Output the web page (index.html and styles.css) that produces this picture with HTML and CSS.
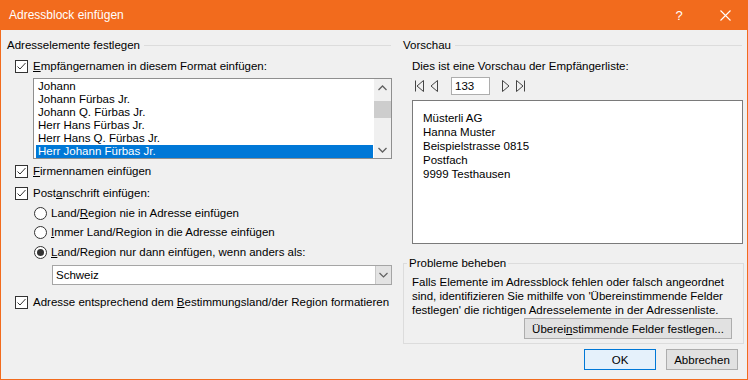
FILE: index.html
```html
<!DOCTYPE html>
<html lang="de">

<head>
    <meta charset="UTF-8">
    <meta name="viewport" content="width=device-width, initial-scale=1.0">
    <title>Adressblock einfügen</title>
    <link rel="stylesheet" href="styles.css">
</head>

<body>
    <div class="dialog">
        <div class="titlebar">
            <span class="title">Adressblock einfügen</span>
            <span class="tb-btn">?</span>
            <span class="tb-btn">
                <svg width="11" height="11" viewBox="0 0 11 11"><path d="M0.5 0.5L10.5 10.5M10.5 0.5L0.5 10.5" stroke="#fff" stroke-width="1.1" fill="none"/></svg>
            </span>
        </div>

        <div class="content">
            <div class="col col-left">
                <div class="group-head"><span>Adresselemente festlegen</span><span class="rule"></span></div>

                <div class="check mt5">
                    <span class="box"><svg width="11" height="11" viewBox="0 0 11 11"><path d="M1.5 5.5L4 8L9.5 2" stroke="#333" fill="none"/></svg></span>
                    <span><u>E</u>mpfängernamen in diesem Format einfügen:</span>
                </div>

                <div class="listbox">
                    <ul class="items">
                        <li>Johann</li>
                        <li>Johann Fürbas Jr.</li>
                        <li>Johann Q. Fürbas Jr.</li>
                        <li>Herr Hans Fürbas Jr.</li>
                        <li>Herr Hans Q. Fürbas Jr.</li>
                        <li class="sel">Herr Johann Fürbas Jr.</li>
                    </ul>
                    <div class="scrollbar">
                        <span class="sb-arrow"><svg width="9" height="6" viewBox="0 0 9 6"><path d="M0.5 5L4.5 1L8.5 5" stroke="#606060" stroke-width="1.3" fill="none"/></svg></span>
                        <span class="thumb"></span>
                        <span class="sb-space"></span>
                        <span class="sb-arrow"><svg width="9" height="6" viewBox="0 0 9 6"><path d="M0.5 1L4.5 5L8.5 1" stroke="#606060" stroke-width="1.3" fill="none"/></svg></span>
                    </div>
                </div>

                <div class="check mt4">
                    <span class="box"><svg width="11" height="11" viewBox="0 0 11 11"><path d="M1.5 5.5L4 8L9.5 2" stroke="#333" fill="none"/></svg></span>
                    <span><u>F</u>irmennamen einfügen</span>
                </div>
                <div class="check mt6">
                    <span class="box"><svg width="11" height="11" viewBox="0 0 11 11"><path d="M1.5 5.5L4 8L9.5 2" stroke="#333" fill="none"/></svg></span>
                    <span>Post<u>a</u>nschrift einfügen:</span>
                </div>

                <div class="radio mt4">
                    <span class="dot"></span>
                    <span>Land/<u>R</u>egion nie in Adresse einfügen</span>
                </div>
                <div class="radio mt3">
                    <span class="dot"></span>
                    <span><u>I</u>mmer Land/Region in die Adresse einfügen</span>
                </div>
                <div class="radio mt4">
                    <span class="dot on"></span>
                    <span><u>L</u>and/Region nur dann einfügen, wenn anders als:</span>
                </div>

                <div class="combo">
                    <span class="combo-text">Schweiz</span>
                    <span class="combo-btn"><svg width="9" height="6" viewBox="0 0 9 6"><path d="M0.5 1L4.5 5L8.5 1" stroke="#606060" stroke-width="1.2" fill="none"/></svg></span>
                </div>

                <div class="check mt9">
                    <span class="box"><svg width="11" height="11" viewBox="0 0 11 11"><path d="M1.5 5.5L4 8L9.5 2" stroke="#333" fill="none"/></svg></span>
                    <span>Adresse entsprechend dem <u>B</u>estimmungsland/der Region formatieren</span>
                </div>
            </div>

            <div class="col col-right">
                <div class="group-head"><span>Vorschau</span><span class="rule"></span></div>
                <div class="hint">Dies ist eine Vorschau der Empfängerliste:</div>

                <div class="nav">
                    <svg class="nav-ico" width="10" height="12" viewBox="0 0 10 12"><path d="M1.5 0.5V11.5M9.5 0.5L3 6L9.5 11.5Z" stroke="#444" fill="none"/></svg>
                    <svg class="nav-ico" width="10" height="12" viewBox="0 0 10 12"><path d="M8.5 0.5L2 6L8.5 11.5Z" stroke="#444" fill="none"/></svg>
                    <span class="record">133</span>
                    <svg class="nav-ico" width="10" height="12" viewBox="0 0 10 12"><path d="M1.5 0.5L8 6L1.5 11.5Z" stroke="#444" fill="none"/></svg>
                    <svg class="nav-ico" width="10" height="12" viewBox="0 0 10 12"><path d="M0.5 0.5L7 6L0.5 11.5ZM8.5 0.5V11.5" stroke="#444" fill="none"/></svg>
                </div>

                <div class="preview">
                    <div>Müsterli AG</div>
                    <div>Hanna Muster</div>
                    <div>Beispielstrasse 0815</div>
                    <div>Postfach</div>
                    <div>9999 Testhausen</div>
                </div>

                <fieldset class="trouble">
                    <legend>Probleme beheben</legend>
                    <p class="trouble-text">Falls Elemente im Adressblock fehlen oder falsch angeordnet<br>sind, identifizieren Sie mithilfe von 'Übereinstimmende Felder<br>festlegen' die richtigen Adresselemente in der Adressenliste.</p>
                    <div class="trouble-actions">
                        <button class="btn match">Überei<u>n</u>stimmende Felder festlegen...</button>
                    </div>
                </fieldset>
            </div>
        </div>

        <div class="footer">
            <button class="btn default">OK</button>
            <button class="btn">Abbrechen</button>
        </div>
    </div>
</body>

</html>
```

FILE: styles.css
```css
* {
    box-sizing: border-box;
}

body {
    margin: 0;
    font-family: "Liberation Sans", Arial, sans-serif;
    font-size: 11.5px;
    color: #000;
    background-color: #f0f0f0;
}

.dialog {
    width: 748px;
    height: 380px;
    border: 1px solid #f26b1d;
    border-top: 0;
    background-color: #f0f0f0;
    display: flex;
    flex-direction: column;
}

.titlebar {
    height: 30px;
    margin: 0 -1px;
    background-color: #f26b1d;
    color: #fff;
    display: flex;
    align-items: center;
}

.title {
    flex: 1;
    padding-left: 9px;
    font-size: 12px;
}

.tb-btn {
    width: 46px;
    height: 30px;
    display: flex;
    align-items: center;
    justify-content: center;
    font-size: 13px;
}

.content {
    display: grid;
    grid-template-columns: 386px 341px;
    column-gap: 10px;
    padding: 7px 3px 0 6px;
}

.col {
    display: flex;
    flex-direction: column;
}

.group-head {
    display: flex;
    align-items: center;
    height: 16px;
    line-height: 16px;
}

.rule {
    flex: 1;
    height: 1px;
    margin: 1px 2px 0 4px;
    background-color: #dcdcdc;
}

.check,
.radio {
    display: flex;
    align-items: center;
    height: 16px;
    line-height: 16px;
    white-space: nowrap;
}

.check {
    padding-left: 8px;
    gap: 5px;
}

.radio {
    padding-left: 27px;
    gap: 4px;
}

.box {
    width: 13px;
    height: 13px;
    border: 1px solid #333;
    background-color: #fff;
    display: flex;
    align-items: center;
    justify-content: center;
}

.dot {
    width: 13px;
    height: 13px;
    border: 1px solid #333;
    border-radius: 50%;
    background-color: #fff;
    display: flex;
    align-items: center;
    justify-content: center;
}

.dot.on::after {
    content: "";
    width: 7px;
    height: 7px;
    border-radius: 50%;
    background-color: #333;
}

.mt3 { margin-top: 3px; }
.mt4 { margin-top: 4px; }
.mt5 { margin-top: 5px; }
.mt6 { margin-top: 6px; }
.mt9 { margin-top: 9px; }

.listbox {
    margin: 4px 1px 0 26px;
    height: 81px;
    border: 1px solid #8f8f8f;
    background-color: #fff;
    display: flex;
}

.items {
    flex: 1;
    list-style: none;
    margin: 0 1px 0 2px;
    padding: 1px 0 0;
}

.items li {
    height: 13px;
    line-height: 13px;
    padding-left: 2px;
    white-space: nowrap;
}

.items li.sel {
    background-color: #0078d7;
    color: #fff;
}

.scrollbar {
    width: 17px;
    background-color: #f0f0f0;
    display: flex;
    flex-direction: column;
    align-items: center;
}

.sb-arrow {
    height: 17px;
    display: flex;
    align-items: center;
    justify-content: center;
}

.thumb {
    width: 17px;
    height: 17px;
    margin-top: 5px;
    background-color: #cdcdcd;
}

.sb-space {
    flex: 1;
}

.combo {
    margin: 5px 1px 0 45px;
    height: 20px;
    border: 1px solid #a5a5a5;
    background-color: #fff;
    display: flex;
}

.combo-text {
    flex: 1;
    padding-left: 3px;
    line-height: 18px;
}

.combo-btn {
    width: 16px;
    background-color: #e3e3e3;
    border-left: 1px solid #c8c8c8;
    display: flex;
    align-items: center;
    justify-content: center;
}

.hint {
    margin-top: 5px;
    padding-left: 9px;
    height: 16px;
    line-height: 16px;
}

.nav {
    margin-top: 3px;
    padding-left: 11px;
    height: 18px;
    display: flex;
    align-items: center;
}

.nav-ico:nth-child(1) { margin-right: 5px; }
.nav-ico:nth-child(2) { margin-right: 12px; }
.nav-ico:nth-child(4) { margin: 0 5px 0 11px; }

.record {
    width: 39px;
    height: 18px;
    border: 1px solid #adadad;
    background-color: #fff;
    padding-left: 3px;
    line-height: 16px;
}

.preview {
    margin: 5px 1px 0 9px;
    height: 144px;
    border: 1px solid #7a7a7a;
    background-color: #fff;
    padding: 10px 0 0 10px;
    line-height: 14px;
}

.trouble {
    margin: 11px 0 0;
    padding: 0;
    border: 1px solid #dcdcdc;
    min-width: 0;
}

.trouble legend {
    margin-left: 3px;
    padding: 0 2px;
    line-height: 16px;
}

.trouble-text {
    margin: 4px 0 0;
    padding-left: 8px;
    line-height: 14px;
    white-space: nowrap;
}

.trouble-actions {
    display: flex;
    justify-content: flex-end;
    padding: 1px 11px 4px 0;
}

.btn {
    font-family: inherit;
    font-size: inherit;
    color: #000;
    height: 21px;
    padding: 0;
    border: 1px solid #adadad;
    background-color: #e1e1e1;
}

.match {
    width: 208px;
}

.footer {
    display: flex;
    justify-content: flex-end;
    gap: 10px;
    margin-top: 5px;
    padding-right: 9px;
}

.footer .btn {
    width: 72px;
}

.btn.default {
    border-color: #0078d7;
    background-color: #e5f1fb;
}
```
